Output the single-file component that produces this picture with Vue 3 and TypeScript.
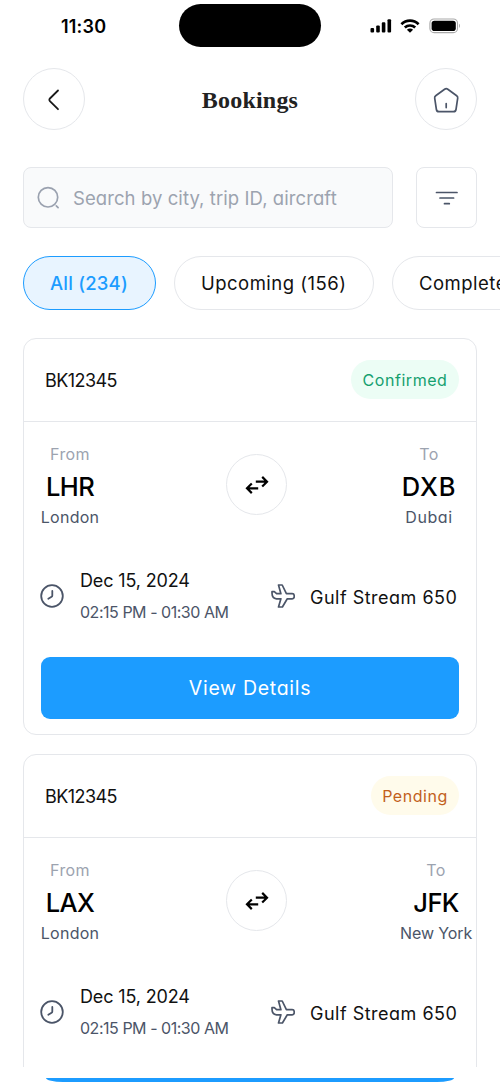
<script setup lang="ts">
interface Booking {
  id: string
  status: 'Confirmed' | 'Pending'
  from: string
  fromCity: string
  to: string
  toCity: string
  date: string
  time: string
  aircraft: string
  action?: string
}

const filters = [
  { label: 'All (234)', key: 'all' },
  { label: 'Upcoming (156)', key: 'upcoming' },
  { label: 'Completed', key: 'completed' },
]
const active = 'all'

const bookings: Booking[] = [
  { id: 'BK12345', status: 'Confirmed', from: 'LHR', fromCity: 'London', to: 'DXB', toCity: 'Dubai', date: 'Dec 15, 2024', time: '02:15 PM - 01:30 AM', aircraft: 'Gulf Stream 650', action: 'View Details' },
  { id: 'BK12345', status: 'Pending', from: 'LAX', fromCity: 'London', to: 'JFK', toCity: 'New York', date: 'Dec 15, 2024', time: '02:15 PM - 01:30 AM', aircraft: 'Gulf Stream 650' },
]
</script>

<template>
  <div class="screen">
    <div class="content">
      <div class="status-bar">
        <span class="clock">11:30</span>
        <div class="island"></div>
        <div class="indicators">
          <svg class="signal" width="22" height="14" viewBox="0 0 22 14">
            <rect x="0.5" y="9" width="3.6" height="4.6" rx="1.1" />
            <rect x="6.2" y="6.4" width="3.6" height="7.2" rx="1.1" />
            <rect x="11.8" y="3.3" width="3.6" height="10.3" rx="1.1" />
            <rect x="17.5" y="0.2" width="3.6" height="13.4" rx="1.1" />
          </svg>
          <svg class="wifi" width="20" height="14" viewBox="0 0 20 14">
            <path d="M1.4 5.2C6.2.5 13.800.5 18.600 5.200M4.800 8.500c2.900-2.700 7.500-2.700 10.400 0" fill="none" stroke="#000" stroke-width="2.7" />
            <path d="M10 13.700l-3.100-3c1.800-1.500 4.400-1.500 6.200 0z" />
          </svg>
          <svg class="battery" width="32" height="16" viewBox="0 0 32 16">
            <rect x="0.9" y="1" width="27.6" height="13.6" rx="4.2" fill="none" stroke="#a9a9a9" stroke-width="1.1" />
            <rect x="2.6" y="2.7" width="24.2" height="10.3" rx="2.8" />
            <path d="M30 5.800c1.300.6 1.300 3.500 0 4.100z" fill="#a9a9a9" />
          </svg>
        </div>
      </div>

      <header class="top">
        <button class="round" aria-label="Back">
          <svg width="30" height="30" viewBox="0 0 30 30" fill="none" stroke="#191919" stroke-width="1.8" stroke-linecap="round" stroke-linejoin="round">
            <path d="M19 5.500L10.900 13.500a1.900 1.900 0 0 0 0 2.700L19 24.200" />
          </svg>
        </button>
        <h1>Bookings</h1>
        <button class="round" aria-label="Home">
          <svg width="30" height="30" viewBox="0 0 30 30" fill="none" stroke="#4b5568" stroke-width="1.7" stroke-linecap="round" stroke-linejoin="round">
            <path d="M13.600 4.200a2.700 2.700 0 0 1 3.200 0l8.900 6.500a2.500 2.500 0 0 1 1 2.500l-1.700 11.300a2.600 2.600 0 0 1-2.600 2.200H8a2.600 2.600 0 0 1-2.600-2.200L3.700 13.200a2.500 2.500 0 0 1 1-2.500zM15.200 18.600v4" />
          </svg>
        </button>
      </header>

      <div class="search-row">
        <div class="search">
          <svg width="24" height="24" viewBox="0 0 24 24" fill="none" stroke="#9aa1af" stroke-width="1.7" stroke-linecap="round">
            <circle cx="11" cy="11.300" r="9.700" />
            <path d="M19.300 19.800l1.800 1.800" />
          </svg>
          <span>Search by city, trip ID, aircraft</span>
        </div>
        <button class="filter" aria-label="Filter">
          <svg width="24" height="16" viewBox="0 0 24 16" fill="none" stroke="#4b5568" stroke-width="1.7" stroke-linecap="round">
            <path d="M1.500 2.500h20.500M5 8h13.600M9.500 13.700h4.800" />
          </svg>
        </button>
      </div>

      <nav class="tabs">
        <button v-for="f in filters" :key="f.key" :class="['tab', f.key, { active: f.key === active }]">{{ f.label }}</button>
      </nav>

      <article v-for="(b, i) in bookings" :key="i" class="card">
        <div class="card-head">
          <span class="booking-id">{{ b.id }}</span>
          <span :class="['badge', b.status.toLowerCase()]">{{ b.status }}</span>
        </div>
        <div class="route">
          <div class="place origin">
            <span class="label">From</span>
            <span :class="['code', b.from.toLowerCase()]">{{ b.from }}</span>
            <span class="city">{{ b.fromCity }}</span>
          </div>
          <div class="swap">
            <svg width="26" height="22" viewBox="0 0 26 22" fill="none" stroke="#000" stroke-width="2.200">
              <path d="M11.800 7.700h11.200M18.200 2.900l4.800 4.800-4.800 4.800M14.200 14.300H3M7.800 9.500L3 14.300l4.800 4.800" />
            </svg>
          </div>
          <div class="place destination">
            <span class="label">To</span>
            <span :class="['code', b.to.toLowerCase()]">{{ b.to }}</span>
            <span :class="['city', b.to.toLowerCase() + '-city']">{{ b.toCity }}</span>
          </div>
        </div>
        <div class="details">
          <svg class="time-icon" width="24" height="24" viewBox="0 0 24 24" fill="none" stroke="#4b5568" stroke-width="1.800" stroke-linecap="round" stroke-linejoin="round">
            <circle cx="12" cy="12" r="10.800" />
            <path d="M12.300 6.900v4.600a1.500 1.500 0 0 1-.7 1.300l-3.300 2" />
          </svg>
          <div class="when">
            <span class="date">{{ b.date }}</span>
            <span class="time">{{ b.time }}</span>
          </div>
          <svg class="plane" width="24" height="24" viewBox="0 0 24 24" fill="none" stroke="#4b5568" stroke-width="1.700" stroke-linejoin="round">
            <path d="M7.500 1h3.700l4.200 8.700h5.800a2 2 0 0 1 2 2v1.100a2 2 0 0 1-2 2h-4.900L11.400 23H7.500l2.400-8.200H5.500C2.800 14.500 1 12 1 9V7.700h2.300l2.300 2h4.300z" />
          </svg>
          <span class="aircraft">{{ b.aircraft }}</span>
        </div>
        <button v-if="b.action" class="view">{{ b.action }}</button>
      </article>
    </div>
    <div class="bottom-edge"></div>
  </div>
</template>

<style>
body {
  margin: 0;
  background: #fff;
}
</style>

<style scoped>
* {
  box-sizing: border-box;
}
.screen {
  width: 500px;
  height: 1082px;
  overflow: hidden;
  background: #fff;
  color: #111;
  font-family: Inter, "Liberation Sans", sans-serif;
  font-feature-settings: "cv11";
  white-space: nowrap;
}
button {
  margin: 0;
  padding: 0;
  font: inherit;
  font-feature-settings: inherit;
  color: inherit;
  background: #fff;
  border: 1px solid #e5e7eb;
}
svg {
  display: block;
  flex: none;
}
.content {
  height: 1067px;
  overflow: hidden;
}
.status-bar {
  display: flex;
  align-items: center;
  height: 51px;
  padding-left: 61px;
}
.clock {
  width: 118px;
  padding-top: 2px;
  font-size: 18px;
  font-weight: 600;
  line-height: 24px;
  letter-spacing: 0.2px;
  color: #000;
}
.island {
  width: 142px;
  height: 43px;
  border-radius: 22px;
  background: #000;
}
.indicators {
  display: flex;
  align-items: center;
  margin-left: 49px;
}
.wifi {
  margin-left: 8px;
}
.battery {
  margin-left: 9px;
}
.top {
  display: flex;
  align-items: center;
  justify-content: space-between;
  height: 62px;
  margin: 17px 23px 0;
}
.round {
  display: flex;
  align-items: center;
  justify-content: center;
  width: 62px;
  height: 62px;
  padding-top: 2px;
  border-radius: 50%;
}
h1 {
  margin: 2px 0 0;
  font-family: "Liberation Serif", serif;
  font-size: 24px;
  font-weight: 700;
  line-height: 32px;
  letter-spacing: 0.2px;
  color: #222;
}
.search-row {
  display: flex;
  gap: 23px;
  margin: 37px 23px 0;
}
.search {
  display: flex;
  align-items: center;
  gap: 12px;
  width: 370px;
  height: 61px;
  padding-left: 13px;
  border: 1px solid #e5e7eb;
  border-radius: 8px;
  background: #f9fafb;
  color: #9ca3af;
  font-size: 18.5px;
  letter-spacing: 0.08px;
}
.filter {
  display: flex;
  align-items: center;
  justify-content: center;
  width: 61px;
  height: 61px;
  border-radius: 8px;
}
.tabs {
  display: flex;
  gap: 18px;
  margin: 28px 0 0 23px;
}
.tab {
  flex: none;
  width: 200px;
  height: 54px;
  padding-left: 26px;
  border-radius: 27px;
  font-size: 18.5px;
  letter-spacing: 0.48px;
  text-align: left;
}
.tab.all {
  width: 133px;
  letter-spacing: 0.2px;
}
.tab.active {
  border-color: #1c9cff;
  background: #e8f4ff;
  color: #1c9cff;
  font-weight: 500;
}
.card {
  width: 454px;
  height: 397px;
  margin: 28px 0 0 23px;
  border: 1px solid #e5e7eb;
  border-radius: 13px;
}
.card + .card {
  margin-top: 19px;
}
.card-head {
  display: flex;
  align-items: center;
  justify-content: space-between;
  height: 83px;
  padding: 0 17px 0 21px;
  border-bottom: 1px solid #e5e7eb;
}
.booking-id {
  font-size: 18px;
  letter-spacing: -0.55px;
}
.badge {
  display: flex;
  align-items: center;
  justify-content: center;
  width: 108px;
  height: 39px;
  margin-bottom: 1px;
  border-radius: 20px;
  font-size: 16px;
  letter-spacing: 0.55px;
}
.confirmed {
  background: #ecfdf5;
  color: #15a06f;
}
.pending {
  width: 88px;
  background: #fffbeb;
  color: #c2601c;
}
.route {
  display: flex;
  height: 114px;
  padding: 20px 0 0 17px;
}
.place {
  display: flex;
  flex-direction: column;
  align-items: center;
  min-width: 58px;
}
.label {
  font-size: 16px;
  line-height: 24px;
  letter-spacing: 0.4px;
  color: #9ca3af;
}
.code {
  font-size: 25.5px;
  font-weight: 500;
  line-height: 42px;
  letter-spacing: -0.6px;
  color: #000;
}
.code.dxb {
  letter-spacing: 0.9px;
}
.city {
  margin-top: -1px;
  font-size: 16px;
  line-height: 20px;
  letter-spacing: 0.25px;
  color: #4b5568;
}
.city.dxb-city {
  letter-spacing: 0.6px;
}
.city.jfk-city {
  letter-spacing: -0.1px;
}
.origin {
  width: 58px;
}
.swap {
  display: flex;
  align-items: center;
  justify-content: center;
  flex: none;
  width: 61px;
  height: 61px;
  margin: 12px 113px 0 127px;
  border: 1px solid #e5e7eb;
  border-radius: 50%;
}
.details {
  display: flex;
  align-items: center;
  height: 80px;
  margin: 20px 0 0 16px;
}
.when {
  display: flex;
  flex-direction: column;
  width: 191px;
  margin-left: 16px;
  padding-top: 1px;
}
.date {
  font-size: 18px;
  line-height: 32px;
  letter-spacing: -0.15px;
}
.time {
  font-size: 16px;
  line-height: 31px;
  letter-spacing: -0.47px;
  color: #4b5568;
}
.aircraft {
  margin-left: 15px;
  padding-top: 2px;
  font-size: 18px;
  letter-spacing: 0.5px;
}
.view {
  display: block;
  width: 418px;
  height: 62px;
  margin: 21px 0 0 17px;
  border: 0;
  border-radius: 9px;
  background: #1c9cff;
  color: #fff;
  font-size: 19.5px;
  letter-spacing: 0.7px;
}
.bottom-edge {
  width: 408px;
  height: 4px;
  margin: 11px auto 0;
  border-radius: 0 0 17px 17px / 0 0 4px 4px;
  background: #1c9cff;
}
</style>
